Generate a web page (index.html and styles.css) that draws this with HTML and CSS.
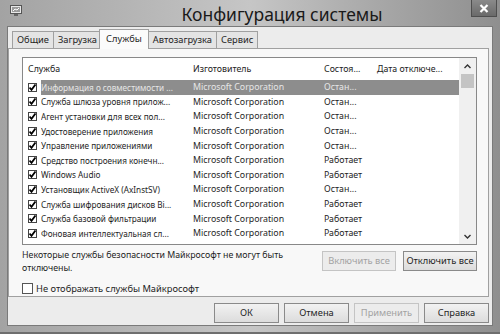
FILE: index.html
```html
<!DOCTYPE html>
<html lang="ru">
<head>
    <meta charset="UTF-8">
    <title>Конфигурация системы</title>
    <link rel="stylesheet" href="styles.css">
</head>
<body>

    <div class="window">
        <!-- Title bar -->
        <div class="titlebar">
            <svg class="app-icon" width="12" height="11" viewBox="0 0 12 11">
                <rect x="0.5" y="0.5" width="11" height="8" fill="#e8e8e8" stroke="#555"/>
                <rect x="2" y="2" width="8" height="5" fill="#9a9a9a"/>
                <path d="M3 6 L5 4 L7 5 L9 3" stroke="#fff" fill="none"/>
                <rect x="4" y="9" width="4" height="2" fill="#666"/>
            </svg>
            <div class="title">Конфигурация системы</div>
            <div class="close-btn">
                <svg width="10" height="9" viewBox="0 0 10 9">
                    <path d="M1.5 1 L8.5 8 M8.5 1 L1.5 8" stroke="#fff" stroke-width="2.2"/>
                </svg>
            </div>
        </div>

        <div class="client">
            <!-- Tabs -->
            <div class="tabs">
                <div class="tab">Общие</div>
                <div class="tab">Загрузка</div>
                <div class="tab active">Службы</div>
                <div class="tab">Автозагрузка</div>
                <div class="tab">Сервис</div>
            </div>

            <div class="panel">
                <div class="list">
                    <div class="list-main">
                        <div class="list-head">
                            <div class="h-name">Служба</div>
                            <div class="c-mfr">Изготовитель</div>
                            <div class="c-status">Состоя...</div>
                            <div class="c-date">Дата отключе...</div>
                        </div>

                        <div class="row selected">
                            <span class="check"></span>
                            <div class="cells"><div class="c-name">Информация о совместимости ...</div><div class="c-mfr">Microsoft Corporation</div><div class="c-status">Остан...</div><div class="c-date"></div></div>
                        </div>
                        <div class="row">
                            <span class="check"></span>
                            <div class="cells"><div class="c-name">Служба шлюза уровня прилож...</div><div class="c-mfr">Microsoft Corporation</div><div class="c-status">Остан...</div><div class="c-date"></div></div>
                        </div>
                        <div class="row">
                            <span class="check"></span>
                            <div class="cells"><div class="c-name">Агент установки для всех пол...</div><div class="c-mfr">Microsoft Corporation</div><div class="c-status">Остан...</div><div class="c-date"></div></div>
                        </div>
                        <div class="row">
                            <span class="check"></span>
                            <div class="cells"><div class="c-name">Удостоверение приложения</div><div class="c-mfr">Microsoft Corporation</div><div class="c-status">Остан...</div><div class="c-date"></div></div>
                        </div>
                        <div class="row">
                            <span class="check"></span>
                            <div class="cells"><div class="c-name">Управление приложениями</div><div class="c-mfr">Microsoft Corporation</div><div class="c-status">Остан...</div><div class="c-date"></div></div>
                        </div>
                        <div class="row">
                            <span class="check"></span>
                            <div class="cells"><div class="c-name">Средство построения конечн...</div><div class="c-mfr">Microsoft Corporation</div><div class="c-status">Работает</div><div class="c-date"></div></div>
                        </div>
                        <div class="row">
                            <span class="check"></span>
                            <div class="cells"><div class="c-name">Windows Audio</div><div class="c-mfr">Microsoft Corporation</div><div class="c-status">Работает</div><div class="c-date"></div></div>
                        </div>
                        <div class="row">
                            <span class="check"></span>
                            <div class="cells"><div class="c-name">Установщик ActiveX (AxInstSV)</div><div class="c-mfr">Microsoft Corporation</div><div class="c-status">Остан...</div><div class="c-date"></div></div>
                        </div>
                        <div class="row">
                            <span class="check"></span>
                            <div class="cells"><div class="c-name">Служба шифрования дисков Bi...</div><div class="c-mfr">Microsoft Corporation</div><div class="c-status">Работает</div><div class="c-date"></div></div>
                        </div>
                        <div class="row">
                            <span class="check"></span>
                            <div class="cells"><div class="c-name">Служба базовой фильтрации</div><div class="c-mfr">Microsoft Corporation</div><div class="c-status">Работает</div><div class="c-date"></div></div>
                        </div>
                        <div class="row">
                            <span class="check"></span>
                            <div class="cells"><div class="c-name">Фоновая интеллектуальная сл...</div><div class="c-mfr">Microsoft Corporation</div><div class="c-status">Работает</div><div class="c-date"></div></div>
                        </div>
                    </div>

                    <!-- Vertical scrollbar -->
                    <div class="scrollbar">
                        <div class="arrow">
                            <svg width="7" height="5" viewBox="0 0 7 5"><path d="M0.5 4 L3.5 1 L6.5 4" stroke="#333" stroke-width="1.4" fill="none"/></svg>
                        </div>
                        <div class="thumb"></div>
                        <div class="track"></div>
                        <div class="arrow">
                            <svg width="7" height="5" viewBox="0 0 7 5"><path d="M0.5 1 L3.5 4 L6.5 1" stroke="#333" stroke-width="1.4" fill="none"/></svg>
                        </div>
                    </div>
                </div>

                <div class="notice">
                    <p>Некоторые службы безопасности Майкрософт не могут быть отключены.</p>
                    <div class="btn disabled">Включить все</div>
                    <div class="btn">Отключить все</div>
                </div>

                <label class="hide-ms">
                    <span class="box"></span>
                    Не отображать службы Майкрософт
                </label>
            </div>

            <div class="footer">
                <div class="btn">ОК</div>
                <div class="btn">Отмена</div>
                <div class="btn disabled">Применить</div>
                <div class="btn">Справка</div>
            </div>
        </div>
    </div>

</body>
</html>
```

FILE: styles.css
```css
body {
    margin: 0;
    padding: 0;
    font-family: 'Noto Sans', 'Open Sans', sans-serif;
    color: #1e1e1e;
    background: #555;
}

.window {
    width: 500px;
    height: 334px;
    box-sizing: border-box;
    padding: 0 7px 6px 7px;
    display: flex;
    flex-direction: column;
    background: linear-gradient(90deg, #a3a3a3 0%, #b4b4b4 25%, #c6c6c6 50%, #a8a8a8 75%, #8f8f8f 100%);
    border-bottom: 2px solid #6e6e6e;
}

/* Title bar */
.titlebar {
    height: 26px;
    flex-shrink: 0;
    position: relative;
    display: flex;
    align-items: center;
    justify-content: center;
}

.app-icon {
    position: absolute;
    left: 3px;
    top: 5px;
}

.title {
    font-size: 17.5px;
    color: #1a1a1a;
    margin-top: 1px;
    margin-left: 64px;
}

.close-btn {
    position: absolute;
    right: -4px;
    top: 0;
    width: 24px;
    height: 16px;
    background: linear-gradient(#8a8a8a, #6a6a6a);
    border: 1px solid #4e4e4e;
    border-top: none;
    display: flex;
    align-items: center;
    justify-content: center;
}

/* Client area */
.client {
    flex: 1;
    background: #ececec;
    display: flex;
    flex-direction: column;
    border: 1px solid #7a7a7a;
}

.tabs {
    display: flex;
    height: 20px;
    padding: 1px 0 0 4px;
    align-items: flex-end;
}

.tab {
    height: 16px;
    padding: 0 4px;
    font-size: 9.3px;
    line-height: 16px;
    border: 1px solid #a0a0a0;
    border-bottom: none;
    background: #e4e4e4;
    margin-right: -1px;
}

.tab.active {
    height: 19px;
    line-height: 17px;
    background: #fbfbfb;
    position: relative;
    z-index: 1;
    margin: 0 0 -1px -2px;
    padding: 0 6px;
}

.tab.active + .tab {
    margin-left: -1px;
}

.panel {
    height: 249px;
    margin-right: 3px;
    background: #f8f8f8;
    border: 1px solid #a0a0a0;
    padding: 8px 11px 0 13px;
    box-sizing: border-box;
}

/* Services list */
.list {
    height: 186px;
    display: flex;
    background: #fff;
    border: 1px solid #888;
    font-size: 8.8px;
}

.list-main {
    flex: 1;
    overflow: hidden;
}

.list-head {
    height: 22px;
    display: flex;
    align-items: center;
    color: #222;
}

.h-name {
    width: 161px;
    padding-left: 5px;
}

.row {
    height: 14.6px;
    display: flex;
    align-items: center;
}

.check {
    width: 9px;
    height: 9px;
    margin: 0 4px 0 5px;
    border: 1px solid #444;
    box-sizing: border-box;
    background: #fff url("data:image/svg+xml;utf8,<svg xmlns='http://www.w3.org/2000/svg' viewBox='0 0 9 9'><path d='M1.5 4.5 L3.5 6.8 L7.5 1.5' stroke='black' stroke-width='1.8' fill='none'/></svg>") center / 9px 9px no-repeat;
    flex-shrink: 0;
}

.cells {
    flex: 1;
    display: flex;
    height: 100%;
    align-items: center;
    white-space: nowrap;
}

.row.selected .cells {
    background: #8d8d8d;
    color: #e6e6e6;
}

.c-name {
    width: 148px;
    font-size: 8.2px;
    overflow: hidden;
}

.c-mfr {
    width: 130px;
    padding-left: 4px;
    box-sizing: border-box;
}

.c-status {
    width: 52px;
    padding-left: 5px;
    box-sizing: border-box;
}

.c-date {
    flex: 1;
    padding-left: 6px;
}

.scrollbar {
    width: 17px;
    display: flex;
    flex-direction: column;
    background: #f0f0f0;
}

.arrow {
    height: 16px;
    display: flex;
    align-items: center;
    justify-content: center;
}

.thumb {
    height: 14px;
    margin: 0 2px;
    background: #c4c4c4;
}

.track {
    flex: 1;
}

/* Notice and buttons under the list */
.notice {
    display: flex;
    align-items: flex-start;
    margin-top: 4px;
    font-size: 8.8px;
}

.notice p {
    margin: 0;
    width: 290px;
    line-height: 13px;
    flex: 1;
}

.btn {
    height: 18px;
    border: 1px solid #8a8a8a;
    background: linear-gradient(#f2f2f2, #dcdcdc);
    font-size: 9.3px;
    line-height: 18px;
    text-align: center;
    white-space: nowrap;
}

.notice .btn {
    width: 72px;
    margin-left: 7px;
    margin-top: 2px;
}

.btn.disabled {
    color: #a2a2a2;
    border-color: #c4c4c4;
    background: #ececec;
}

.hide-ms {
    display: flex;
    align-items: center;
    margin-top: 7px;
    font-size: 9.3px;
}

.hide-ms .box {
    width: 11px;
    height: 11px;
    border: 1px solid #555;
    background: #fff;
    box-sizing: border-box;
    margin-right: 3px;
}

/* Dialog buttons */
.footer {
    display: flex;
    justify-content: flex-end;
    gap: 5px;
    padding: 6px 3px 0 0;
}

.footer .btn {
    width: 63px;
}
```
